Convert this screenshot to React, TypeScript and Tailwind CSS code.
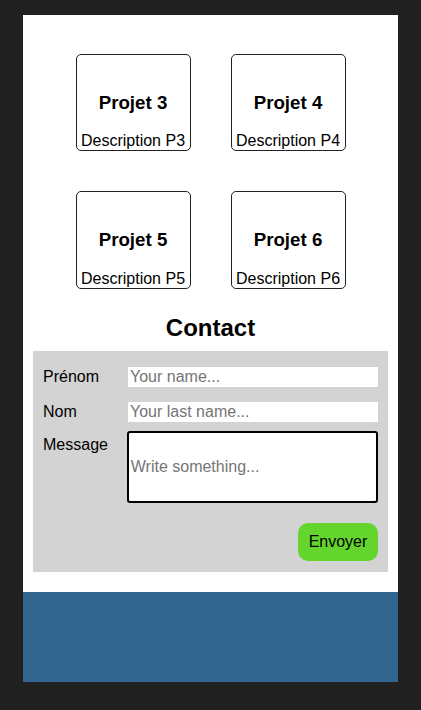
import React from "react";

function Card({ n, h }: { n: number; h: string }) {
  return (
    <div className={`flex w-[115px] flex-col items-center rounded-[5px] border border-[#222] bg-white ${h}`}>
      <h3 className="mt-[37px] text-[18.72px] font-bold leading-[21px] text-black">Projet {n}</h3>
      <p className="mt-auto mb-0 whitespace-nowrap text-[16px] leading-[18px] text-black">Description P{n}</p>
    </div>
  );
}

export default function App() {
  return (
    <div
      className="min-h-[710px] w-full bg-[#202020] pt-[15px] pb-[28px]"
      style={{ fontFamily: '"Liberation Sans", Arial, sans-serif' }}
    >
      <div className="mx-[23px] bg-white">
        <div className="flex flex-col items-center pt-[39px]">
          <div className="flex gap-[40px]">
            <Card n={3} h="h-[97px]" />
            <Card n={4} h="h-[97px]" />
          </div>
          <div className="mt-[40px] flex gap-[40px]">
            <Card n={5} h="h-[98px]" />
            <Card n={6} h="h-[98px]" />
          </div>
        </div>
        <h2 className="mt-[25px] text-center text-[24px] font-bold leading-[28px] text-black">Contact</h2>
        <div className="px-[10px] pt-[9px] pb-[20px]">
          <form className="bg-[#d3d3d3] px-[10px] pt-[16px] pb-[11px]" onSubmit={(e) => e.preventDefault()}>
            <div className="flex items-center">
              <label className="w-[85px] text-[16px] leading-[18px] text-black">Prénom</label>
              <input
                className="h-[20px] w-[250px] bg-white px-[2px] text-[16px] leading-[18px] text-black outline-none placeholder:text-[#757575]"
                placeholder="Your name..."
              />
            </div>
            <div className="mt-[15px] flex items-center">
              <label className="w-[85px] text-[16px] leading-[18px] text-black">Nom</label>
              <input
                className="h-[20px] w-[250px] bg-white px-[2px] text-[16px] leading-[18px] text-black outline-none placeholder:text-[#757575]"
                placeholder="Your last name..."
              />
            </div>
            <div className="mt-[9px] flex items-start">
              <label className="mt-[5px] w-[84px] text-[16px] leading-[18px] text-black">Message</label>
              <textarea
                className="h-[72px] w-[252px] resize-none rounded-[3px] border-2 border-black bg-white px-[2px] pt-[25px] text-[16px] leading-[18px] text-black outline-none placeholder:text-[#757575]"
                placeholder="Write something..."
              />
            </div>
            <div className="mt-[20px] flex justify-end">
              <button
                type="submit"
                className="h-[38px] w-[80px] rounded-[10px] bg-[#64d52c] text-center text-[16px] leading-[18px] text-black"
              >
                Envoyer
              </button>
            </div>
          </form>
        </div>
        <div className="h-[90px] bg-[#31658f]" />
      </div>
    </div>
  );
}
